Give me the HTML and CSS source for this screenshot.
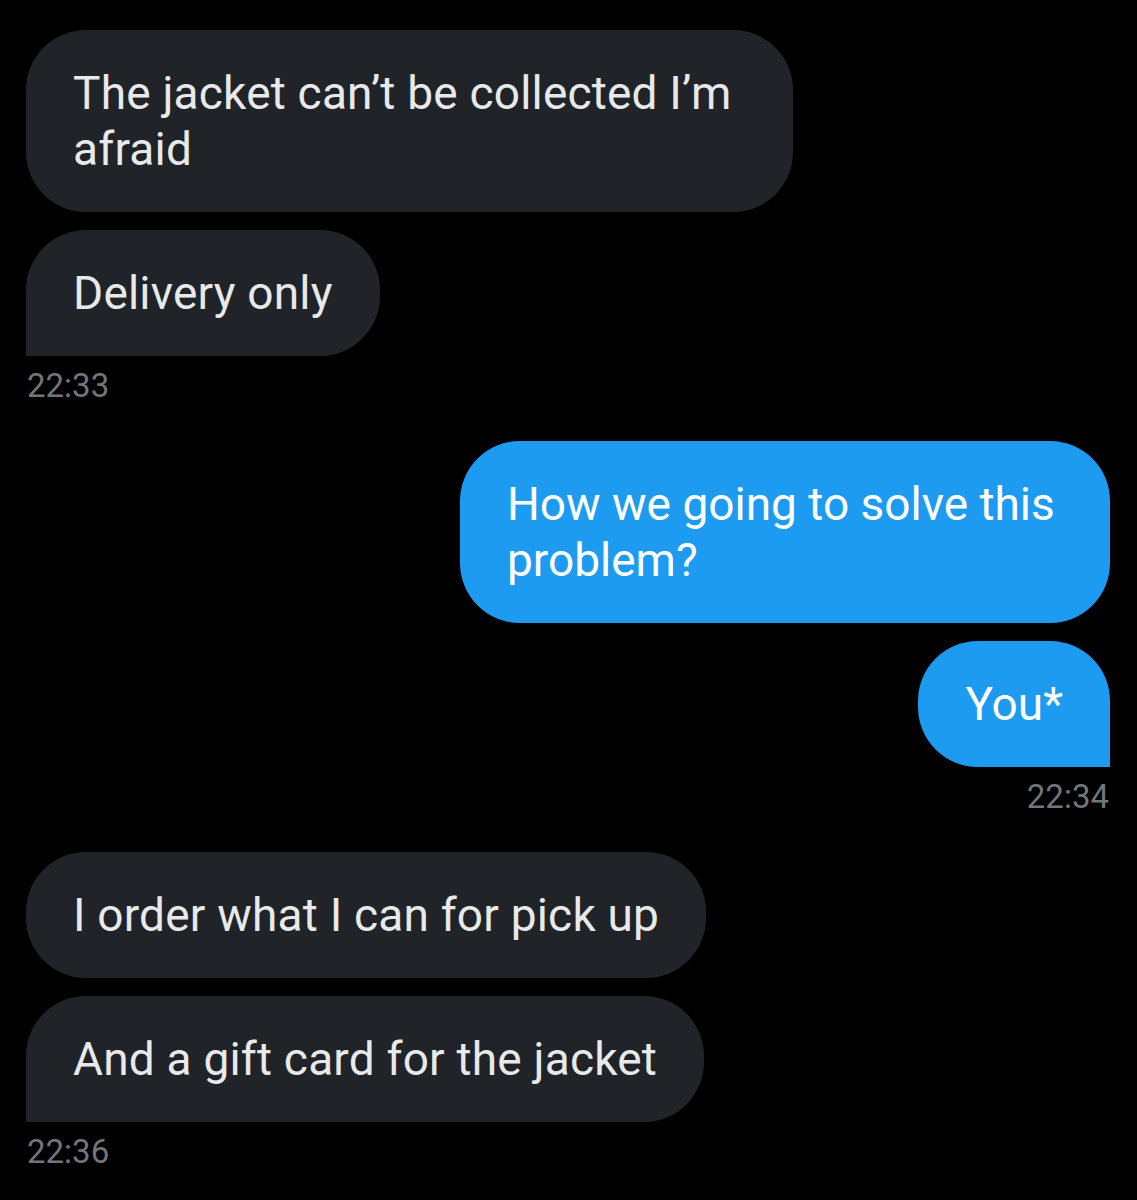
FILE: index.html
```html
<!DOCTYPE html>
<html lang="en">
<head>
    <meta charset="UTF-8">
    <meta name="viewport" content="width=device-width, initial-scale=1.0">
    <title>Messages</title>
    <link rel="stylesheet" href="styles.css">
</head>
<body>
<div class="thread">

  <div class="group in">
    <div class="bubble first wide-in">The jacket can’t be collected I’m<br>afraid</div>
    <div class="bubble last">Delivery only</div>
    <div class="time">22:33</div>
  </div>

  <div class="group out">
    <div class="bubble first wide-out">How we going to solve this<br>problem?</div>
    <div class="bubble last">You*</div>
    <div class="time">22:34</div>
  </div>

  <div class="group in">
    <div class="bubble first">I order what I can for pick up</div>
    <div class="bubble last">And a gift card for the jacket</div>
    <div class="time">22:36</div>
  </div>

</div>
</body>
</html>
```

FILE: styles.css
```css
html, body {
    margin: 0;
    background: #000;
}

body {
    font-family: Roboto, "Noto Sans", sans-serif;
}

.thread {
    display: flex;
    flex-direction: column;
    gap: 35px;
    padding: 30px 27px 0 26px;
}

.group {
    display: flex;
    flex-direction: column;
    gap: 18px;
}

.group.in {
    align-items: flex-start;
}

.group.out {
    align-items: flex-end;
}

.bubble {
    font-size: 46px;
    line-height: 56px;
    padding: 35px 47px;
    border-radius: 60px;
    white-space: nowrap;
}

.in .bubble {
    background: #202327;
    color: #e7e9ea;
    letter-spacing: 0.2px;
}

.in .bubble.last {
    border-bottom-left-radius: 0;
}

.out .bubble {
    background: #1d9bf0;
    color: #fff;
}

.out .bubble.last {
    border-bottom-right-radius: 0;
}

/* wrapped messages keep the full bubble width */
.wide-in {
    width: 673px;
}

.wide-out {
    width: 556px;
}

.time {
    font-size: 33px;
    line-height: 40px;
    color: #71767b;
    margin-top: -8px;
    padding: 0 1px;
}
```
